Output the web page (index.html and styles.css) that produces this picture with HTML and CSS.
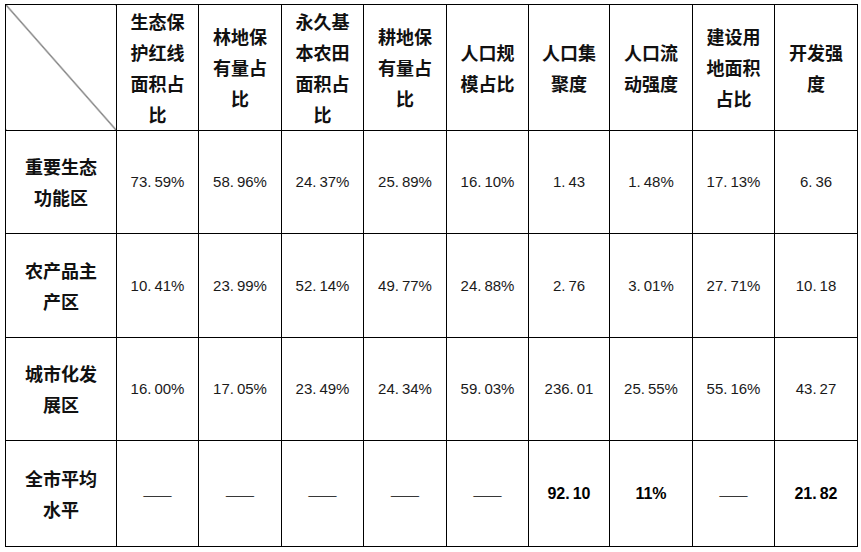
FILE: index.html
```html
<!DOCTYPE html>
<html lang="zh-CN">
<head>
<meta charset="utf-8">
<title>功能区指标对比</title>
<link rel="stylesheet" href="styles.css">
</head>
<body>
<table class="grid">
  <colgroup>
    <col class="c-head">
    <col class="c82"><col class="c83"><col class="c82"><col class="c83"><col class="c82"><col class="c81"><col class="c83"><col class="c82"><col class="c83">
  </colgroup>
  <thead>
    <tr class="r-head">
      <th class="diag"></th>
      <th>生态保护红线面积占比</th>
      <th>林地保有量占比</th>
      <th>永久基本农田面积占比</th>
      <th>耕地保有量占比</th>
      <th>人口规模占比</th>
      <th>人口集聚度</th>
      <th>人口流动强度</th>
      <th>建设用地面积占比</th>
      <th>开发强度</th>
    </tr>
  </thead>
  <tbody>
    <tr class="r1">
      <th>重要生态功能区</th>
      <td>73<span class="dot">.</span>59%</td>
      <td>58<span class="dot">.</span>96%</td>
      <td>24<span class="dot">.</span>37%</td>
      <td>25<span class="dot">.</span>89%</td>
      <td>16<span class="dot">.</span>10%</td>
      <td>1<span class="dot">.</span>43</td>
      <td>1<span class="dot">.</span>48%</td>
      <td>17<span class="dot">.</span>13%</td>
      <td>6<span class="dot">.</span>36</td>
    </tr>
    <tr class="r2">
      <th>农产品主产区</th>
      <td>10<span class="dot">.</span>41%</td>
      <td>23<span class="dot">.</span>99%</td>
      <td>52<span class="dot">.</span>14%</td>
      <td>49<span class="dot">.</span>77%</td>
      <td>24<span class="dot">.</span>88%</td>
      <td>2<span class="dot">.</span>76</td>
      <td>3<span class="dot">.</span>01%</td>
      <td>27<span class="dot">.</span>71%</td>
      <td>10<span class="dot">.</span>18</td>
    </tr>
    <tr class="r3">
      <th>城市化发展区</th>
      <td>16<span class="dot">.</span>00%</td>
      <td>17<span class="dot">.</span>05%</td>
      <td>23<span class="dot">.</span>49%</td>
      <td>24<span class="dot">.</span>34%</td>
      <td>59<span class="dot">.</span>03%</td>
      <td>236<span class="dot">.</span>01</td>
      <td>25<span class="dot">.</span>55%</td>
      <td>55<span class="dot">.</span>16%</td>
      <td>43<span class="dot">.</span>27</td>
    </tr>
    <tr class="r4">
      <th>全市平均水平</th>
      <td class="dash">——</td>
      <td class="dash">——</td>
      <td class="dash">——</td>
      <td class="dash">——</td>
      <td class="dash">——</td>
      <td class="strong">92<span class="dot">.</span>10</td>
      <td class="strong">11%</td>
      <td class="dash">——</td>
      <td class="strong">21<span class="dot">.</span>82</td>
    </tr>
  </tbody>
</table>
</body>
</html>
```

FILE: styles.css
```css
html, body {
  margin: 0;
  padding: 0;
  background: #ffffff;
}

body {
  padding: 4px 0 0 5px;
  color: #111111;
  font-family: "Noto Sans CJK SC", "Noto Sans", sans-serif;
}

.grid {
  border-collapse: collapse;
  table-layout: fixed;
  width: 852px;
}

.c-head { width: 111px; }
.c81 { width: 81px; }
.c82 { width: 82px; }
.c83 { width: 83px; }

.grid th,
.grid td {
  border: 1px solid #000000;
  text-align: center;
  vertical-align: middle;
  padding: 0 12px;
}

.grid th {
  font-family: "Noto Sans CJK SC", sans-serif;
  font-weight: 700;
  font-size: 18px;
  line-height: 31px;
  color: #111111;
}

.grid td {
  font-family: "Liberation Sans", Arial, sans-serif;
  font-size: 15px;
  line-height: 20px;
  color: #1a1a1a;
  padding: 0 2px;
  white-space: nowrap;
}

.dot {
  padding-right: 3px;
}

.grid td.strong {
  font-size: 16px;
  font-weight: 700;
  color: #000000;
}

.grid td.dash {
  font-family: "Noto Sans CJK SC", sans-serif;
  font-size: 18px;
  font-weight: 300;
  color: #000000;
}

.r-head { height: 126px; }
.r1 { height: 103px; }
.r2 { height: 104px; }
.r3 { height: 103px; }
.r4 { height: 106px; }

.diag {
  background: linear-gradient(to top right,
    transparent calc(50% - 0.7px),
    #000000 50%,
    transparent calc(50% + 0.7px));
}
```
